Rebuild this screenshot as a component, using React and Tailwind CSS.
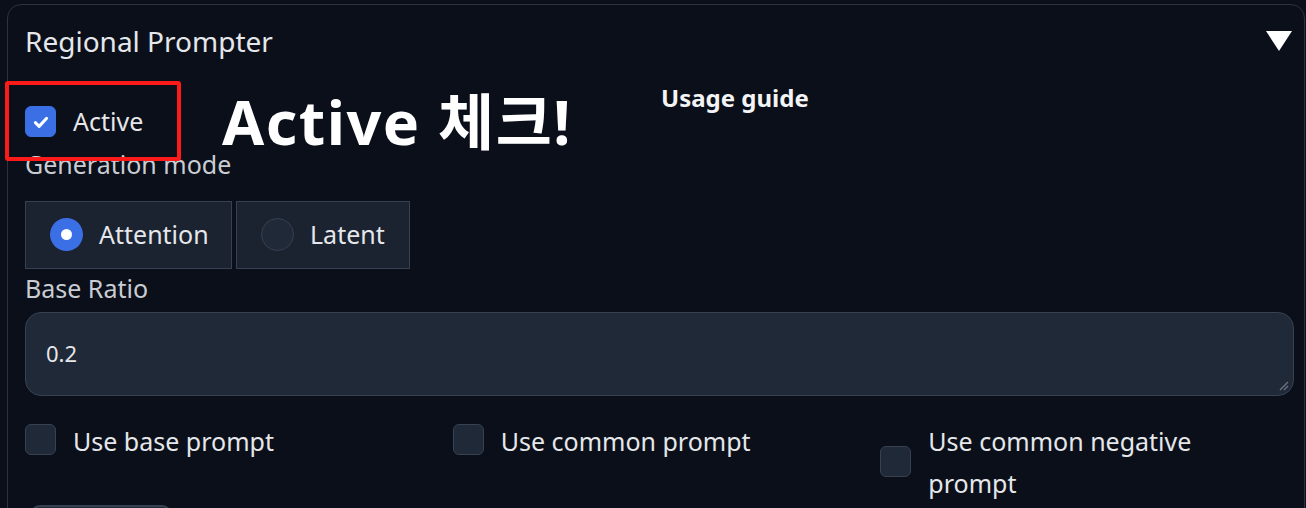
import React from 'react';

const font = { fontFamily: '"Noto Sans", "Noto Sans CJK KR", sans-serif' };

function Check({ checked, className = '' }) {
  return (
    <div
      className={`flex h-[31px] w-[31px] shrink-0 items-center justify-center rounded-[6px] border ${
        checked ? 'border-[#3b6fe6] bg-[#3b6fe6]' : 'border-[#374151] bg-[#1f2937]'
      } ${className}`}
    >
      {checked && (
        <svg width="20" height="20" viewBox="0 0 16 16" fill="none">
          <path d="M3.5 8.5l3 3 6-6.5" stroke="white" strokeWidth="2.4" strokeLinecap="round" strokeLinejoin="round" />
        </svg>
      )}
    </div>
  );
}

function Radio({ label, checked, className }) {
  return (
    <div className={`flex h-[68px] items-center gap-[16px] border border-[#374151] bg-[#1b2230] pl-[24px] ${className}`}>
      {checked ? (
        <div className="flex h-[33px] w-[33px] items-center justify-center rounded-full bg-[#3b6fe6]">
          <div className="h-[11px] w-[11px] rounded-full bg-white" />
        </div>
      ) : (
        <div className="h-[33px] w-[33px] rounded-full border border-[#374151] bg-[#1f2937]" />
      )}
      <span className="text-[25px] text-[#e5e7eb]">{label}</span>
    </div>
  );
}

export default function App() {
  return (
    <div className="h-[508px] w-[1306px] overflow-hidden bg-[#0b0f19] pl-[7px] pt-[4px]" style={font}>
      <div className="relative h-[560px] w-[1298px] rounded-[14px] border border-[#2b3240] pl-[17px] pr-[10px]">
        <div className="flex h-[72px] items-center justify-between pr-[2px]">
          <span className="text-[28px] text-[#e5e7eb]">Regional Prompter</span>
          <svg width="26" height="20" viewBox="0 0 26 20">
            <path d="M0 0h26L13 20z" fill="white" />
          </svg>
        </div>

        <div className="flex">
          <div className="w-[636px]">
            <div className="mt-[26px] flex items-center gap-[17px]">
              <Check checked />
              <span className="text-[25px] text-[#e5e7eb]">Active</span>
            </div>
            <div className="mt-[8px] text-[25px] leading-[30px] text-[#c9cdd3]">Generation mode</div>
          </div>
          <div className="mt-[3px] text-[24px] font-bold text-[#f3f4f6]">Usage guide</div>
        </div>

        <div className="mt-[22px] flex gap-[4px]">
          <Radio label="Attention" checked className="w-[207px]" />
          <Radio label="Latent" className="w-[174px]" />
        </div>

        <div className="mt-[4px] text-[25px] leading-[30px] text-[#c9cdd3]">Base Ratio</div>

        <div className="relative mt-[9px] flex h-[84px] items-center rounded-[16px] border border-[#374151] bg-[#1f2937] pl-[20px]">
          <span className="text-[22px] text-[#e5e7eb]">0.2</span>
          <svg className="absolute bottom-[4px] right-[4px]" width="12" height="12" viewBox="0 0 12 12">
            <path d="M11 3L3 11M11 7L7 11" stroke="#6b7280" strokeWidth="1.4" />
          </svg>
        </div>

        <div className="mt-[24px] grid grid-cols-3 gap-[14px]">
          <div className="flex items-start gap-[17px]">
            <Check className="mt-[4px]" />
            <span className="text-[25px] leading-[42px] text-[#e5e7eb]">Use base prompt</span>
          </div>
          <div className="flex items-start gap-[17px]">
            <Check className="mt-[4px]" />
            <span className="text-[25px] leading-[42px] text-[#e5e7eb]">Use common prompt</span>
          </div>
          <div className="flex items-center gap-[17px]">
            <Check />
            <span className="text-[25px] leading-[42px] text-[#e5e7eb]">
              Use common negative
              <br />
              prompt
            </span>
          </div>
        </div>

        <div className="mt-[1px] ml-[5px] h-[40px] w-[142px] rounded-[10px] border-2 border-[#374151] bg-[#1f2937]" />

        <div className="pointer-events-none absolute left-[-3px] top-[76px] h-[80px] w-[176px] rounded-[3px] border-[4px] border-[#ff1a1a]" />
        <div className="absolute left-[214px] top-[77px] text-[61px] font-bold leading-[80px] tracking-[1.5px] text-white">
          Active 체크!
        </div>
      </div>
    </div>
  );
}
